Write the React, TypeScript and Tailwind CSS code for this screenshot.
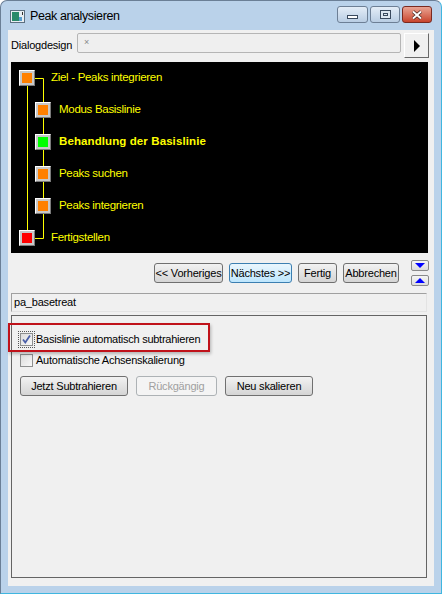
import React from 'react';

const font = { fontFamily: '"Liberation Sans", Arial, sans-serif' };

type Node = { label: string; level: 0 | 1; color: string; bold?: boolean };

const nodes: Node[] = [
  { label: 'Ziel - Peaks integrieren', level: 0, color: 'bg-[#ff8000]' },
  { label: 'Modus Basislinie', level: 1, color: 'bg-[#ff8000]' },
  { label: 'Behandlung der Basislinie', level: 1, color: 'bg-[#00ff00]', bold: true },
  { label: 'Peaks suchen', level: 1, color: 'bg-[#ff8000]' },
  { label: 'Peaks integrieren', level: 1, color: 'bg-[#ff8000]' },
  { label: 'Fertigstellen', level: 0, color: 'bg-[#ff0000]' },
];

const NodeBox: React.FC<{ color: string }> = ({ color }) => (
  <div className="w-4 h-4 shrink-0 bg-[#c8c8c8] border border-t-white border-l-white border-r-[#7a7a7a] border-b-[#7a7a7a] flex items-center justify-center">
    <div className={`w-[10px] h-[10px] ${color}`}></div>
  </div>
);

const WinButton: React.FC<{ label: string; width: string; focused?: boolean; disabled?: boolean }> = ({ label, width, focused, disabled }) => (
  <button
    className={`${width} h-[20px] shrink-0 rounded-[3px] border text-[11px] tracking-[-0.2px] leading-none flex items-center justify-center ${
      focused
        ? 'border-[#3c7fb1] bg-gradient-to-b from-[#eaf6fd] to-[#bee6fd]'
        : disabled
        ? 'border-[#adb2b5] bg-[#f4f4f4] text-[#a0a0a0]'
        : 'border-[#707070] bg-gradient-to-b from-[#f2f2f2] to-[#d5d5d5]'
    }`}
  >
    {label}
  </button>
);

const Checkbox: React.FC<{ checked?: boolean }> = ({ checked }) => (
  <div className="w-[13px] h-[13px] shrink-0 border border-[#8e8f8f] bg-gradient-to-br from-[#dcdcdc] to-[#f8f8f8] flex items-center justify-center">
    {checked && (
      <svg width="11" height="11" viewBox="0 0 11 11">
        <path d="M2 5.5 L4.3 8.5 L9 1.5" fill="none" stroke="#4a5fa8" strokeWidth="1.8" />
      </svg>
    )}
  </div>
);

const App: React.FC = () => {
  return (
    <div style={font} className="w-[442px] h-[594px] bg-[#bad2ea] rounded-t-[7px] border border-[#6b7f96] border-r-[#3fb6e0] border-b-[#3fb6e0] flex flex-col text-black overflow-hidden">
      {/* Title bar */}
      <div className="h-[29px] shrink-0 flex items-center pl-[9px] pr-[9px]">
        <svg width="15" height="13" viewBox="0 0 15 13" className="shrink-0 mt-[2px]">
          <rect x="0.5" y="0.5" width="14" height="12" fill="#e8eef2" stroke="#5c6f80" />
          <rect x="2" y="2" width="7" height="9" fill="#2a8a6a" />
          <rect x="9" y="7" width="3" height="4" fill="#5a9fd0" />
          <rect x="12" y="2" width="1" height="3" fill="#333" />
        </svg>
        <span className="ml-[5px] mt-[2px] text-[12.5px] tracking-[-0.4px] text-black">Peak analysieren</span>
        <div className="ml-auto flex items-center gap-[2px] mt-[-2px]">
          <div className="w-[31px] h-[17px] rounded-[3px] border border-[#6d7f95] bg-gradient-to-b from-[#e4edf7] to-[#b9cde3] flex items-center justify-center">
            <div className="w-[11px] h-[4px] border border-[#3a4a5e] bg-white mt-[4px]"></div>
          </div>
          <div className="w-[30px] h-[17px] rounded-[3px] border border-[#6d7f95] bg-gradient-to-b from-[#e4edf7] to-[#b9cde3] flex items-center justify-center">
            <div className="w-[11px] h-[9px] border border-[#3a4a5e] bg-[#dde7f1] flex items-center justify-center">
              <div className="w-[5px] h-[3px] border border-[#3a4a5e]"></div>
            </div>
          </div>
          <div className="w-[30px] h-[17px] rounded-[3px] border border-[#7a2a20] bg-gradient-to-b from-[#e8a393] to-[#c8432c] flex items-center justify-center">
            <svg width="12" height="10" viewBox="0 0 12 10">
              <path d="M2 1.5 L10 8.5 M10 1.5 L2 8.5" stroke="#3b1a14" strokeWidth="3.2" />
              <path d="M2 1.5 L10 8.5 M10 1.5 L2 8.5" stroke="#ffffff" strokeWidth="2" />
            </svg>
          </div>
        </div>
      </div>

      {/* Client area */}
      <div className="flex-1 mx-[7px] mb-[7px] bg-[#f0f0f0] flex flex-col pl-[3px] pr-[4px]">
        {/* Dialogdesign row */}
        <div className="flex items-start mt-[3px] h-[26px]">
          <span className="text-[11px] tracking-[-0.2px] mt-[4px] w-[66px]">Dialogdesign</span>
          <div className="w-[324px] h-[20px] border border-[#b5b5b5] rounded-[2px] bg-[#efefef] relative">
            <span className="absolute left-[6px] top-[2px] text-[9px] text-[#888]">×</span>
          </div>
          <div className="ml-[3px] w-[25px] h-[25px] border border-t-white border-l-white border-r-[#696969] border-b-[#696969] bg-[#f0f0f0] flex items-center justify-center">
            <svg width="8" height="12" viewBox="0 0 8 12">
              <path d="M1 0 L7 6 L1 12 Z" fill="#000" />
            </svg>
          </div>
        </div>

        {/* Wizard tree */}
        <div className="mt-[3px] w-[417px] h-[191px] bg-black relative">
          <svg width="40" height="191" className="absolute left-0 top-0">
            <path d="M16.5 23 V168 M24 16.5 H32.5 V176.5 H24" stroke="#ffff00" fill="none" strokeWidth="1" />
          </svg>
          <div className="relative flex flex-col">
            {nodes.map((n) => (
              <div key={n.label} className={`h-[32px] flex items-center ${n.level === 0 ? 'pl-[8px]' : 'pl-[24px]'}`}>
                <NodeBox color={n.color} />
                <span
                  className={`text-[11.5px] text-[#ffff00] ${n.level === 0 ? 'ml-[16px]' : 'ml-[8px]'} ${
                    n.bold ? 'font-bold tracking-[0.1px]' : 'tracking-[-0.3px]'
                  }`}
                >
                  {n.label}
                </span>
              </div>
            ))}
          </div>
        </div>

        {/* Navigation buttons */}
        <div className="flex items-center h-[40px]">
          <div className="ml-auto flex gap-[6px] items-center">
            <WinButton label="<< Vorheriges" width="w-[69px]" />
            <WinButton label="Nächstes >>" width="w-[63px]" focused />
            <WinButton label="Fertig" width="w-[39px]" />
            <WinButton label="Abbrechen" width="w-[56px]" />
          </div>
          <div className="ml-[12px] mr-[1px] flex flex-col gap-[4px]">
            <div className="w-[18px] h-[11px] rounded-[2px] border border-[#8a8a8a] bg-gradient-to-b from-[#f6f6f6] to-[#dcdcdc] flex items-center justify-center">
              <svg width="10" height="5" viewBox="0 0 10 5"><path d="M0 0 H10 L5 5 Z" fill="#0000ff" /></svg>
            </div>
            <div className="w-[18px] h-[11px] rounded-[2px] border border-[#8a8a8a] bg-gradient-to-b from-[#f6f6f6] to-[#dcdcdc] flex items-center justify-center">
              <svg width="10" height="5" viewBox="0 0 10 5"><path d="M0 5 H10 L5 0 Z" fill="#0000ff" /></svg>
            </div>
          </div>
        </div>

        {/* Name field */}
        <div className="w-[416px] h-[19px] border border-t-[#a0a0a0] border-l-[#a0a0a0] border-r-[#e3e3e3] border-b-[#e3e3e3] flex items-center pl-[2px]">
          <span className="text-[11px] tracking-[-0.2px]">pa_basetreat</span>
        </div>

        {/* Options group */}
        <div className="mt-[3px] w-[416px] h-[263px] border border-[#646464] relative flex flex-col pl-[8px] pt-[16px]">
          <div className="absolute left-[-4px] top-[7px] w-[202px] h-[29px] border-2 border-[#c0121a] shadow-[1px_2px_3px_rgba(0,0,0,0.25)]"></div>
          <div className="flex items-center h-[14px]">
            <div className="outline-1 outline-dotted outline-[#555] outline-offset-[1px]">
              <Checkbox checked />
            </div>
            <span className="ml-[3px] text-[11px] tracking-[-0.25px]">Basislinie automatisch subtrahieren</span>
          </div>
          <div className="flex items-center h-[14px] mt-[7px]">
            <Checkbox />
            <span className="ml-[3px] text-[11px] tracking-[-0.25px]">Automatische Achsenskalierung</span>
          </div>
          <div className="flex gap-[8px] mt-[9px]">
            <WinButton label="Jetzt Subtrahieren" width="w-[108px]" />
            <WinButton label="Rückgängig" width="w-[81px]" disabled />
            <WinButton label="Neu skalieren" width="w-[88px]" />
          </div>
        </div>
      </div>
    </div>
  );
};

export default App;
